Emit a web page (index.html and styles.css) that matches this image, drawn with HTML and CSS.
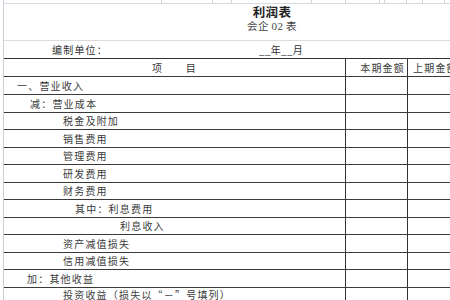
FILE: index.html
```html
<!DOCTYPE html>
<html lang="zh-CN">
<head>
<meta charset="utf-8">
<title>利润表</title>
<link rel="stylesheet" href="styles.css">
</head>
<body>
<div class="sheet">
  <div class="topgrid">
    <span class="stub w158"></span><span class="stub w51"></span><span class="stub w19"></span><span class="stub w80"></span><span class="stub w34"></span><span class="stub w34"></span><span class="stub w5"></span><span class="stub w22"></span><span class="stub w16"></span><span class="stub w22"></span>
  </div>
  <div class="title-block">
    <div class="title">利润表</div>
    <div class="subtitle">会企 <span class="num">02</span> 表</div>
  </div>
  <div class="meta">
    <span class="unit">编制单位：</span>
    <span class="period">__年__月</span>
  </div>
  <div class="table">
    <div class="row head">
      <div class="cell item center">项　　目</div>
      <div class="cell amt right">本期金额</div>
      <div class="cell amt2">上期金额</div>
    </div>
    <div class="row r18">
      <div class="cell item i1">一、营业收入</div><div class="cell amt"></div><div class="cell amt2"></div>
    </div>
    <div class="row">
      <div class="cell item i2">减：营业成本</div><div class="cell amt"></div><div class="cell amt2"></div>
    </div>
    <div class="row">
      <div class="cell item i3">税金及附加</div><div class="cell amt"></div><div class="cell amt2"></div>
    </div>
    <div class="row">
      <div class="cell item i3">销售费用</div><div class="cell amt"></div><div class="cell amt2"></div>
    </div>
    <div class="row">
      <div class="cell item i3">管理费用</div><div class="cell amt"></div><div class="cell amt2"></div>
    </div>
    <div class="row">
      <div class="cell item i3">研发费用</div><div class="cell amt"></div><div class="cell amt2"></div>
    </div>
    <div class="row">
      <div class="cell item i3">财务费用</div><div class="cell amt"></div><div class="cell amt2"></div>
    </div>
    <div class="row">
      <div class="cell item i4">其中：利息费用</div><div class="cell amt"></div><div class="cell amt2"></div>
    </div>
    <div class="row">
      <div class="cell item i5">利息收入</div><div class="cell amt"></div><div class="cell amt2"></div>
    </div>
    <div class="row">
      <div class="cell item i3">资产减值损失</div><div class="cell amt"></div><div class="cell amt2"></div>
    </div>
    <div class="row">
      <div class="cell item i3">信用减值损失</div><div class="cell amt"></div><div class="cell amt2"></div>
    </div>
    <div class="row">
      <div class="cell item i6">加：其他收益</div><div class="cell amt"></div><div class="cell amt2"></div>
    </div>
    <div class="row last">
      <div class="cell item i3">投资收益（损失以“－”号填列）</div><div class="cell amt"></div><div class="cell amt2"></div>
    </div>
  </div>
</div>
</body>
</html>
```

FILE: styles.css
```css
* { box-sizing: border-box; }
html, body { margin: 0; padding: 0; background: #fff; overflow: hidden; }
body {
  width: 450px;
  height: 300px;
  font-family: "Noto Sans CJK SC", "Noto Sans", sans-serif;
  color: #3a3a3a;
}
.sheet {
  margin-left: 3px;
  border-left: 1px solid #c6ceda;
  height: 300px;
  width: 447px;
  overflow: hidden;
}
.topgrid {
  display: flex;
  height: 4px;
  margin-left: -4px;
  border-bottom: 1px solid #d6dae0;
}
.stub { flex: none; height: 3px; border-right: 1px solid #cfd3d9; }
.w158 { width: 162px; }
.w51 { width: 51px; }
.w19 { width: 19px; }
.w80 { width: 80px; }
.w34 { width: 34px; }
.w5 { width: 5px; }
.w22 { width: 22px; }
.w16 { width: 16px; }
.title-block {
  height: 37px;
  border-bottom: 1px solid #dcdcdc;
  padding-left: 228px;
  padding-top: 1px;
  width: 536px;
  display: flex;
  flex-direction: column;
  gap: 1px;
}
.title-block > div { width: 80px; text-align: center; }
.title {
  font-size: 12.5px;
  font-weight: bold;
  line-height: 13px;
  letter-spacing: 0.3px;
  color: #222;
}
.subtitle {
  font-size: 10.5px;
  line-height: 13px;
  color: #444;
  letter-spacing: 0.4px;
}
.num { font-family: "Liberation Serif", serif; font-size: 11px; }
.meta {
  display: flex;
  height: 18px;
  align-items: center;
  font-size: 10px;
  letter-spacing: 1.2px;
  border-bottom: 1px solid #333;
  color: #333;
}
.unit { margin-left: 48px; }
.period { margin-left: 151px; letter-spacing: 0.3px; }
.row {
  display: grid;
  grid-template-columns: 342px 62px 1fr;
  height: 17.52px;
  border-bottom: 1px solid #3a3a3a;
  font-size: 10px;
  letter-spacing: 1.2px;
  color: #3a3a3a;
}
.row.head { height: 18px; }
.row.r18 { height: 18px; }
.cell {
  display: flex;
  align-items: center;
  white-space: nowrap;
  overflow: hidden;
}
.row.last .cell { align-items: flex-start; padding-top: 1px; line-height: 11px; }
.item, .amt { border-right: 1px solid #333; }
.center { justify-content: center; }
.right { justify-content: flex-end; padding-right: 2px; }
.amt2 { padding-left: 5px; }
.i1 { padding-left: 13px; }
.i2 { padding-left: 26px; }
.i3 { padding-left: 59px; }
.i4 { padding-left: 71px; }
.i5 { padding-left: 116px; }
.i6 { padding-left: 23px; }
```
